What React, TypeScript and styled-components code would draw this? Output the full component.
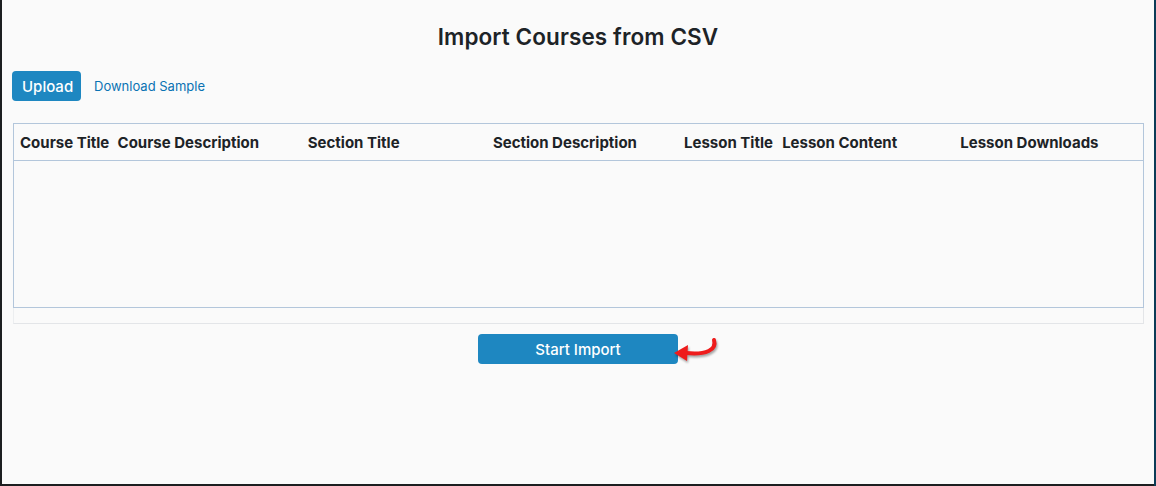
import styled, { createGlobalStyle } from 'styled-components';

const GlobalStyle = createGlobalStyle`
  html, body {
    margin: 0;
    padding: 0;
    background: #1c1e20;
    font-family: Inter, 'Liberation Sans', sans-serif;
  }
`;

const Frame = styled('div')({
  display: 'flex',
  width: 1156,
  height: 486,
  background: '#1c1e20',
});

const Edge = styled('div')(
  { height: 486, flexShrink: 0 },
  ({ width, color }: { width: number; color: string }) => ({
    width,
    background: color,
  }),
);

const Panel = styled('div')({
  flex: 1,
  height: 484,
  background: '#fafafa',
  boxSizing: 'border-box',
  padding: '0 10px 0 10px',
  display: 'flex',
  flexDirection: 'column',
});

const Title = styled('h1')({
  margin: '24px 0 0',
  textAlign: 'center',
  fontSize: 22.5,
  lineHeight: '26px',
  fontWeight: 600,
  color: '#1d2327',
  letterSpacing: 0.1,
});

const Toolbar = styled('div')({
  display: 'flex',
  alignItems: 'center',
  gap: 13,
  marginTop: 21,
});

const Button = styled('button')(
  {
    background: '#1e87c1',
    color: '#fff',
    border: 'none',
    borderRadius: 4,
    height: 30,
    fontFamily: 'Inter, "Liberation Sans", sans-serif',
    fontWeight: 500,
    fontSize: 15,
    cursor: 'pointer',
  },
  ({ wide }: { wide?: boolean }) => ({
    width: wide ? 200 : 69,
    padding: wide ? 0 : '0 10px',
  }),
);

const SampleLink = styled('a')({
  color: '#0a72b3',
  fontSize: 13,
  textDecoration: 'none',
});

const TableWrap = styled('div')({
  marginTop: 22,
  marginLeft: 1,
  width: 1131,
});

const Table = styled('table')({
  width: '100%',
  borderCollapse: 'collapse',
  tableLayout: 'fixed',
  border: '1px solid #b3c6db',
});

const Th = styled('th')({
  textAlign: 'left',
  fontSize: 15,
  fontWeight: 700,
  color: '#1d2327',
  padding: '0 0 0 6px',
  height: 36,
  whiteSpace: 'nowrap',
  borderBottom: '1px solid #b3c6db',
});

const BodyCell = styled('td')({
  height: 144,
});

const ScrollTrack = styled('div')({
  height: 15,
  borderRight: '1px solid #e3e5e8',
  borderBottom: '1px solid #e3e5e8',
  borderLeft: '1px solid #eceef0',
});

const Footer = styled('div')({
  display: 'flex',
  justifyContent: 'center',
  alignItems: 'center',
  marginTop: 8,
  paddingLeft: 42,
});

const Arrow = styled('svg')({
  width: 50,
  height: 30,
  marginLeft: -8,
  marginTop: 4,
  filter: 'drop-shadow(1px 2px 1px rgba(0,0,0,0.35))',
});

const columns: [string, number][] = [
  ['Course Title', 98],
  ['Course Description', 190],
  ['Section Title', 185],
  ['Section Description', 191],
  ['Lesson Title', 98],
  ['Lesson Content', 178],
  ['Lesson Downloads', 189],
];

export default function App() {
  return (
    <>
      <GlobalStyle />
      <Frame>
        <Edge width={2} color="#1c1e20" />
        <Panel>
          <Title>Import Courses from CSV</Title>
          <Toolbar>
            <Button>Upload</Button>
            <SampleLink href="#">Download Sample</SampleLink>
          </Toolbar>
          <TableWrap>
            <Table>
              <colgroup>
                {columns.map(([name, w]) => (
                  <col key={name} style={{ width: w }} />
                ))}
              </colgroup>
              <thead>
                <tr>
                  {columns.map(([name]) => (
                    <Th key={name}>{name}</Th>
                  ))}
                </tr>
              </thead>
              <tbody>
                <tr>
                  <BodyCell colSpan={columns.length} />
                </tr>
              </tbody>
            </Table>
            <ScrollTrack />
          </TableWrap>
          <Footer>
            <Button wide>Start Import</Button>
            <Arrow viewBox="0 0 50 30">
              <path
                d="M44 4 C47 14 36 19 16 17"
                fill="none"
                stroke="#ee1c1c"
                strokeWidth="4"
                strokeLinecap="round"
              />
              <path d="M4 17 L18 9 L17 25 Z" fill="#ee1c1c" />
            </Arrow>
          </Footer>
        </Panel>
        <Edge width={3} color="#0b3c57" />
      </Frame>
    </>
  );
}
